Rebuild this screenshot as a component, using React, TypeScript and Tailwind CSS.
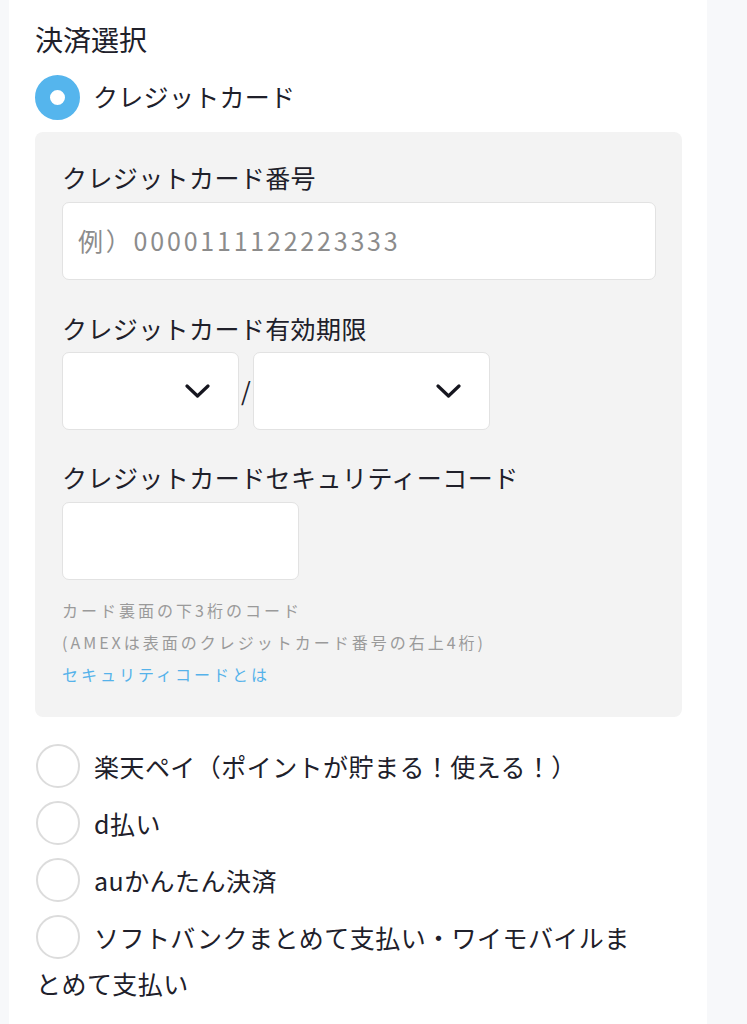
import React from "react";

const font = { fontFamily: '"Noto Sans CJK JP", "Noto Sans", sans-serif' };

function Chevron() {
  return (
    <svg width="25" height="15" viewBox="0 0 25 15" fill="none">
      <polyline points="2,2 12.5,12 23,2" stroke="#16161f" strokeWidth="3.2" strokeLinecap="round" strokeLinejoin="round" />
    </svg>
  );
}

function Option({ label }: { label: string }) {
  return (
    <div className="mb-[11px] w-[604px] text-[25px] leading-[46px] tracking-[0.45px] text-[#20202a]">
      <span className="float-left mt-[1px] mr-[14px] box-border h-[44px] w-[44px] rounded-full border-2 border-[#dcdcdc] bg-white" />
      {label}
    </div>
  );
}

export default function App() {
  return (
    <div className="flex min-h-[1024px] w-[747px] bg-[#f7f8fa]" style={font}>
      <div className="ml-[9px] w-[698px] overflow-hidden bg-white pl-[26px] pr-[25px] pt-[19px]">
        <div className="text-[28px] leading-[40px] text-[#20202a]">決済選択</div>
        <div className="mt-[16px] flex h-[44px] items-center">
          <span className="box-border h-[45px] w-[45px] rounded-full border-[15px] border-[#55b5ed] bg-white" />
          <span className="ml-[13px] text-[25px] tracking-[0.3px] text-[#20202a]">クレジットカード</span>
        </div>
        <div className="mt-[13px] rounded-[8px] bg-[#f3f3f3] pb-[27px] pl-[27px] pr-[26px] pt-[27px]">
          <div className="text-[25px] leading-[37px] tracking-[0.4px] text-[#20202a]">クレジットカード番号</div>
          <div className="mt-[6px] flex h-[78px] items-center rounded-[7px] border border-[#e2e2e2] bg-white pl-[15px]">
            <span className="text-[25px] tracking-[2.8px] text-[#8c8c8c]">例）0000111122223333</span>
          </div>
          <div className="mt-[30px] text-[25px] leading-[37px] tracking-[0.4px] text-[#20202a]">クレジットカード有効期限</div>
          <div className="mt-[5px] flex items-center">
            <div className="flex h-[78px] w-[177px] items-center justify-end rounded-[7px] border border-[#e2e2e2] bg-white pr-[28px]">
              <Chevron />
            </div>
            <span className="w-[14px] text-center text-[25px] text-[#20202a]">/</span>
            <div className="flex h-[78px] w-[237px] items-center justify-end rounded-[7px] border border-[#e2e2e2] bg-white pr-[28px]">
              <Chevron />
            </div>
          </div>
          <div className="mt-[29px] text-[25px] leading-[37px] tracking-[0.45px] text-[#20202a]">クレジットカードセキュリティーコード</div>
          <div className="mt-[6px] h-[78px] w-[237px] rounded-[7px] border border-[#e2e2e2] bg-white" />
          <div className="mt-[14px] text-[16px] leading-[32px] tracking-[3px] text-[#9a9a9a]">
            <div>カード裏面の下3桁のコード</div>
            <div>(AMEXは表面のクレジットカード番号の右上4桁)</div>
            <div className="text-[#55b2ea]">セキュリティコードとは</div>
          </div>
        </div>
        <div className="mt-[26px] pl-[1px]">
          <Option label="楽天ペイ（ポイントが貯まる！使える！）" />
          <Option label="d払い" />
          <Option label="auかんたん決済" />
          <Option label="ソフトバンクまとめて支払い・ワイモバイルまとめて支払い" />
        </div>
      </div>
    </div>
  );
}
